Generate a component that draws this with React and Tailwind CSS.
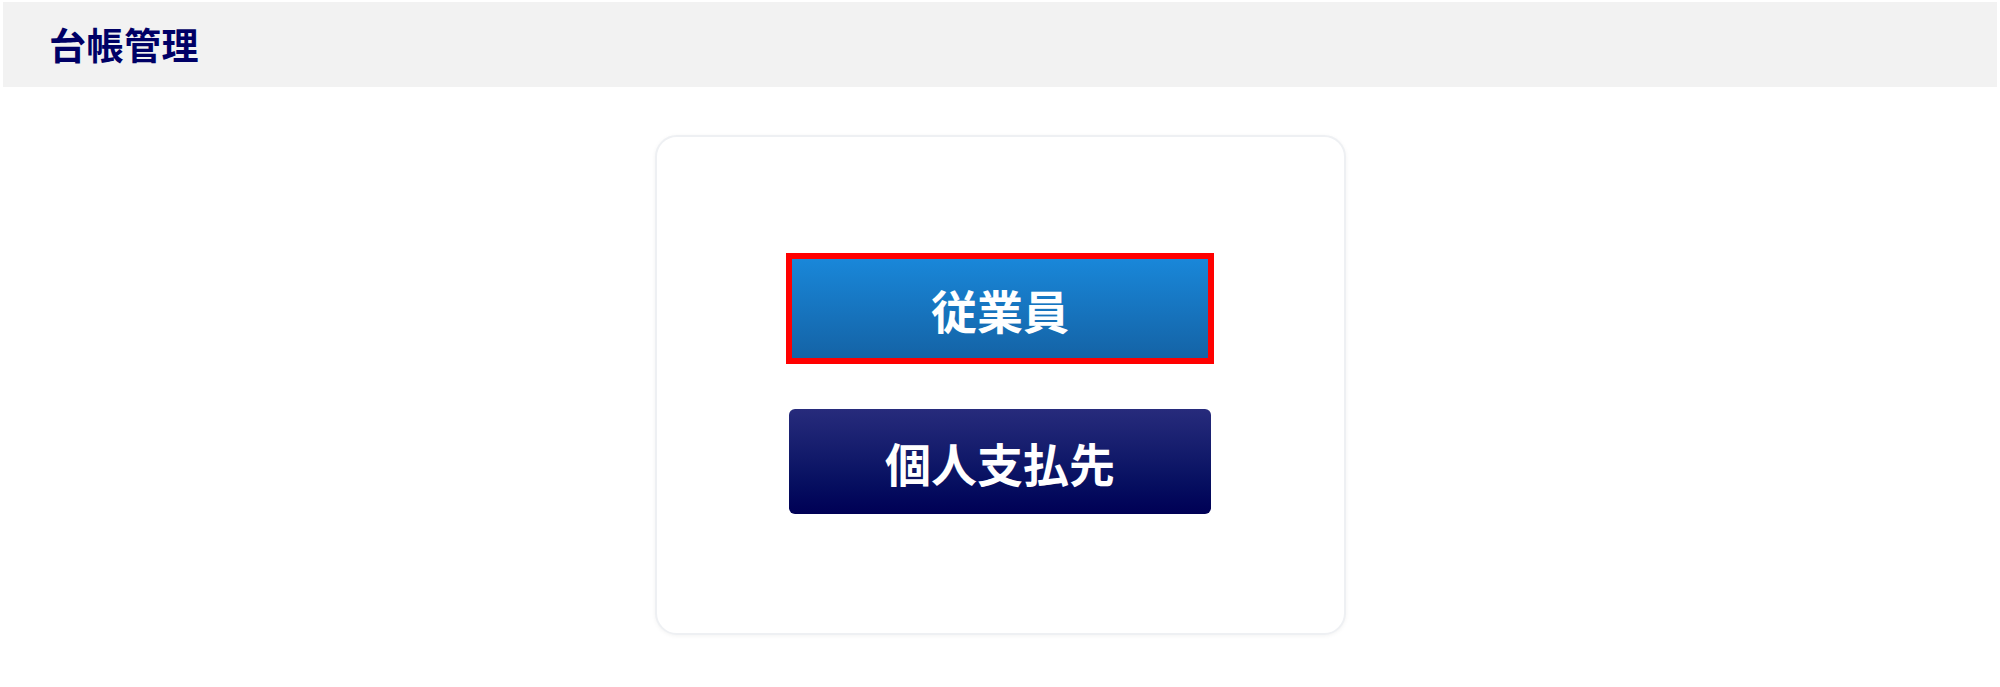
import React from 'react';

const font = { fontFamily: '"Noto Sans CJK JP", "Noto Sans", sans-serif' };

export default function App() {
  return (
    <div className="min-h-[687px] bg-white pt-[2px] px-[3px]" style={font}>
      {/* Header */}
      <div className="h-[85px] bg-[#f2f2f2] flex items-center pl-[46px]">
        <h1 className="text-[37px] font-bold text-[#000066] leading-none tracking-[0.5px]">台帳管理</h1>
      </div>

      {/* Card */}
      <div className="flex justify-center mt-[48px]">
        <div className="w-[691px] h-[500px] bg-white rounded-[22px] border-2 border-[#eef0f3] shadow-[0_1px_4px_rgba(0,0,0,0.05)] flex flex-col items-center pt-[116px] gap-[45px]">
          <button className="w-[428px] h-[111px] border-[6px] border-[#ff0000] bg-gradient-to-b from-[#1987d9] to-[#1463a6] flex items-center justify-center">
            <span className="text-[46px] font-bold text-white leading-none">従業員</span>
          </button>
          <button className="w-[422px] h-[105px] rounded-[6px] bg-gradient-to-b from-[#272b7c] to-[#000055] flex items-center justify-center">
            <span className="text-[46px] font-bold text-white leading-none">個人支払先</span>
          </button>
        </div>
      </div>
    </div>
  );
}
